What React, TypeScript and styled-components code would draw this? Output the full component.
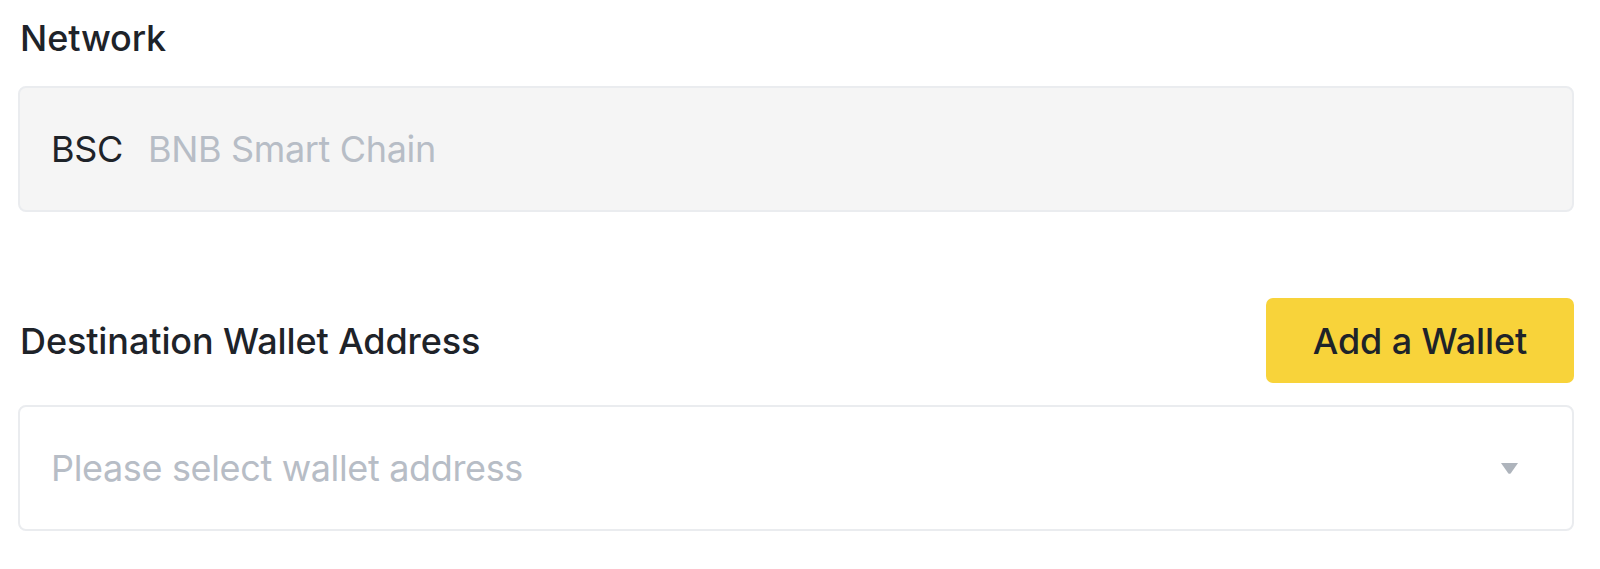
import React from "react";
import styled, { createGlobalStyle } from "styled-components";

const Global = createGlobalStyle`
  html, body { margin: 0; padding: 0; background: #ffffff; }
  body { font-family: Inter, "Noto Sans", sans-serif; color: #1e2329; }
`;

const Page = styled.div`
  width: 1600px;
  height: 569px;
  box-sizing: border-box;
  padding: 14px 26px 0 18px;
  display: flex;
  flex-direction: column;
`;

const Label = styled.div`
  font-size: 36px;
  line-height: 48px;
  font-weight: 500;
  letter-spacing: -0.1px;
  color: #1e2329;
  padding-left: 2px;
`;

const Field = styled.div<{ $disabled?: boolean }>`
  box-sizing: border-box;
  height: 126px;
  border: 2px solid #eaecef;
  border-radius: 8px;
  background: ${(p) => (p.$disabled ? "#f5f5f5" : "#ffffff")};
  display: flex;
  align-items: center;
  padding: 0 54px 0 31px;
  font-size: 36px;
`;

const Strong = styled.span`
  color: #1e2329;
  margin-right: 25px;
  letter-spacing: -0.3px;
`;

const Muted = styled.span`
  color: #b7bdc6;
  flex: 1;
  letter-spacing: -0.35px;
`;

const Row = styled.div`
  display: flex;
  align-items: center;
  justify-content: space-between;
  margin-top: 86px;
  margin-bottom: 22px;
`;

const Button = styled.button`
  width: 308px;
  height: 85px;
  border: none;
  border-radius: 7px;
  background: #f8d33a;
  color: #1e2329;
  font-family: inherit;
  font-size: 36px;
  font-weight: 500;
  letter-spacing: -0.1px;
  padding: 0;
  cursor: pointer;
`;

const Arrow = styled.svg`
  width: 17px;
  height: 11px;
  display: block;
`;

export default function App() {
  return (
    <>
      <Global />
      <Page>
        <Label>Network</Label>
        <Field $disabled style={{ marginTop: 24 }}>
          <Strong>BSC</Strong>
          <Muted>BNB Smart Chain</Muted>
        </Field>
        <Row>
          <Label>Destination Wallet Address</Label>
          <Button>Add a Wallet</Button>
        </Row>
        <Field>
          <Muted>Please select wallet address</Muted>
          <Arrow viewBox="0 0 17 11">
            <path d="M0 0 H17 L9.8 10.2 Q8.5 11.5 7.2 10.2 Z" fill="#aeb4bc" />
          </Arrow>
        </Field>
      </Page>
    </>
  );
}
